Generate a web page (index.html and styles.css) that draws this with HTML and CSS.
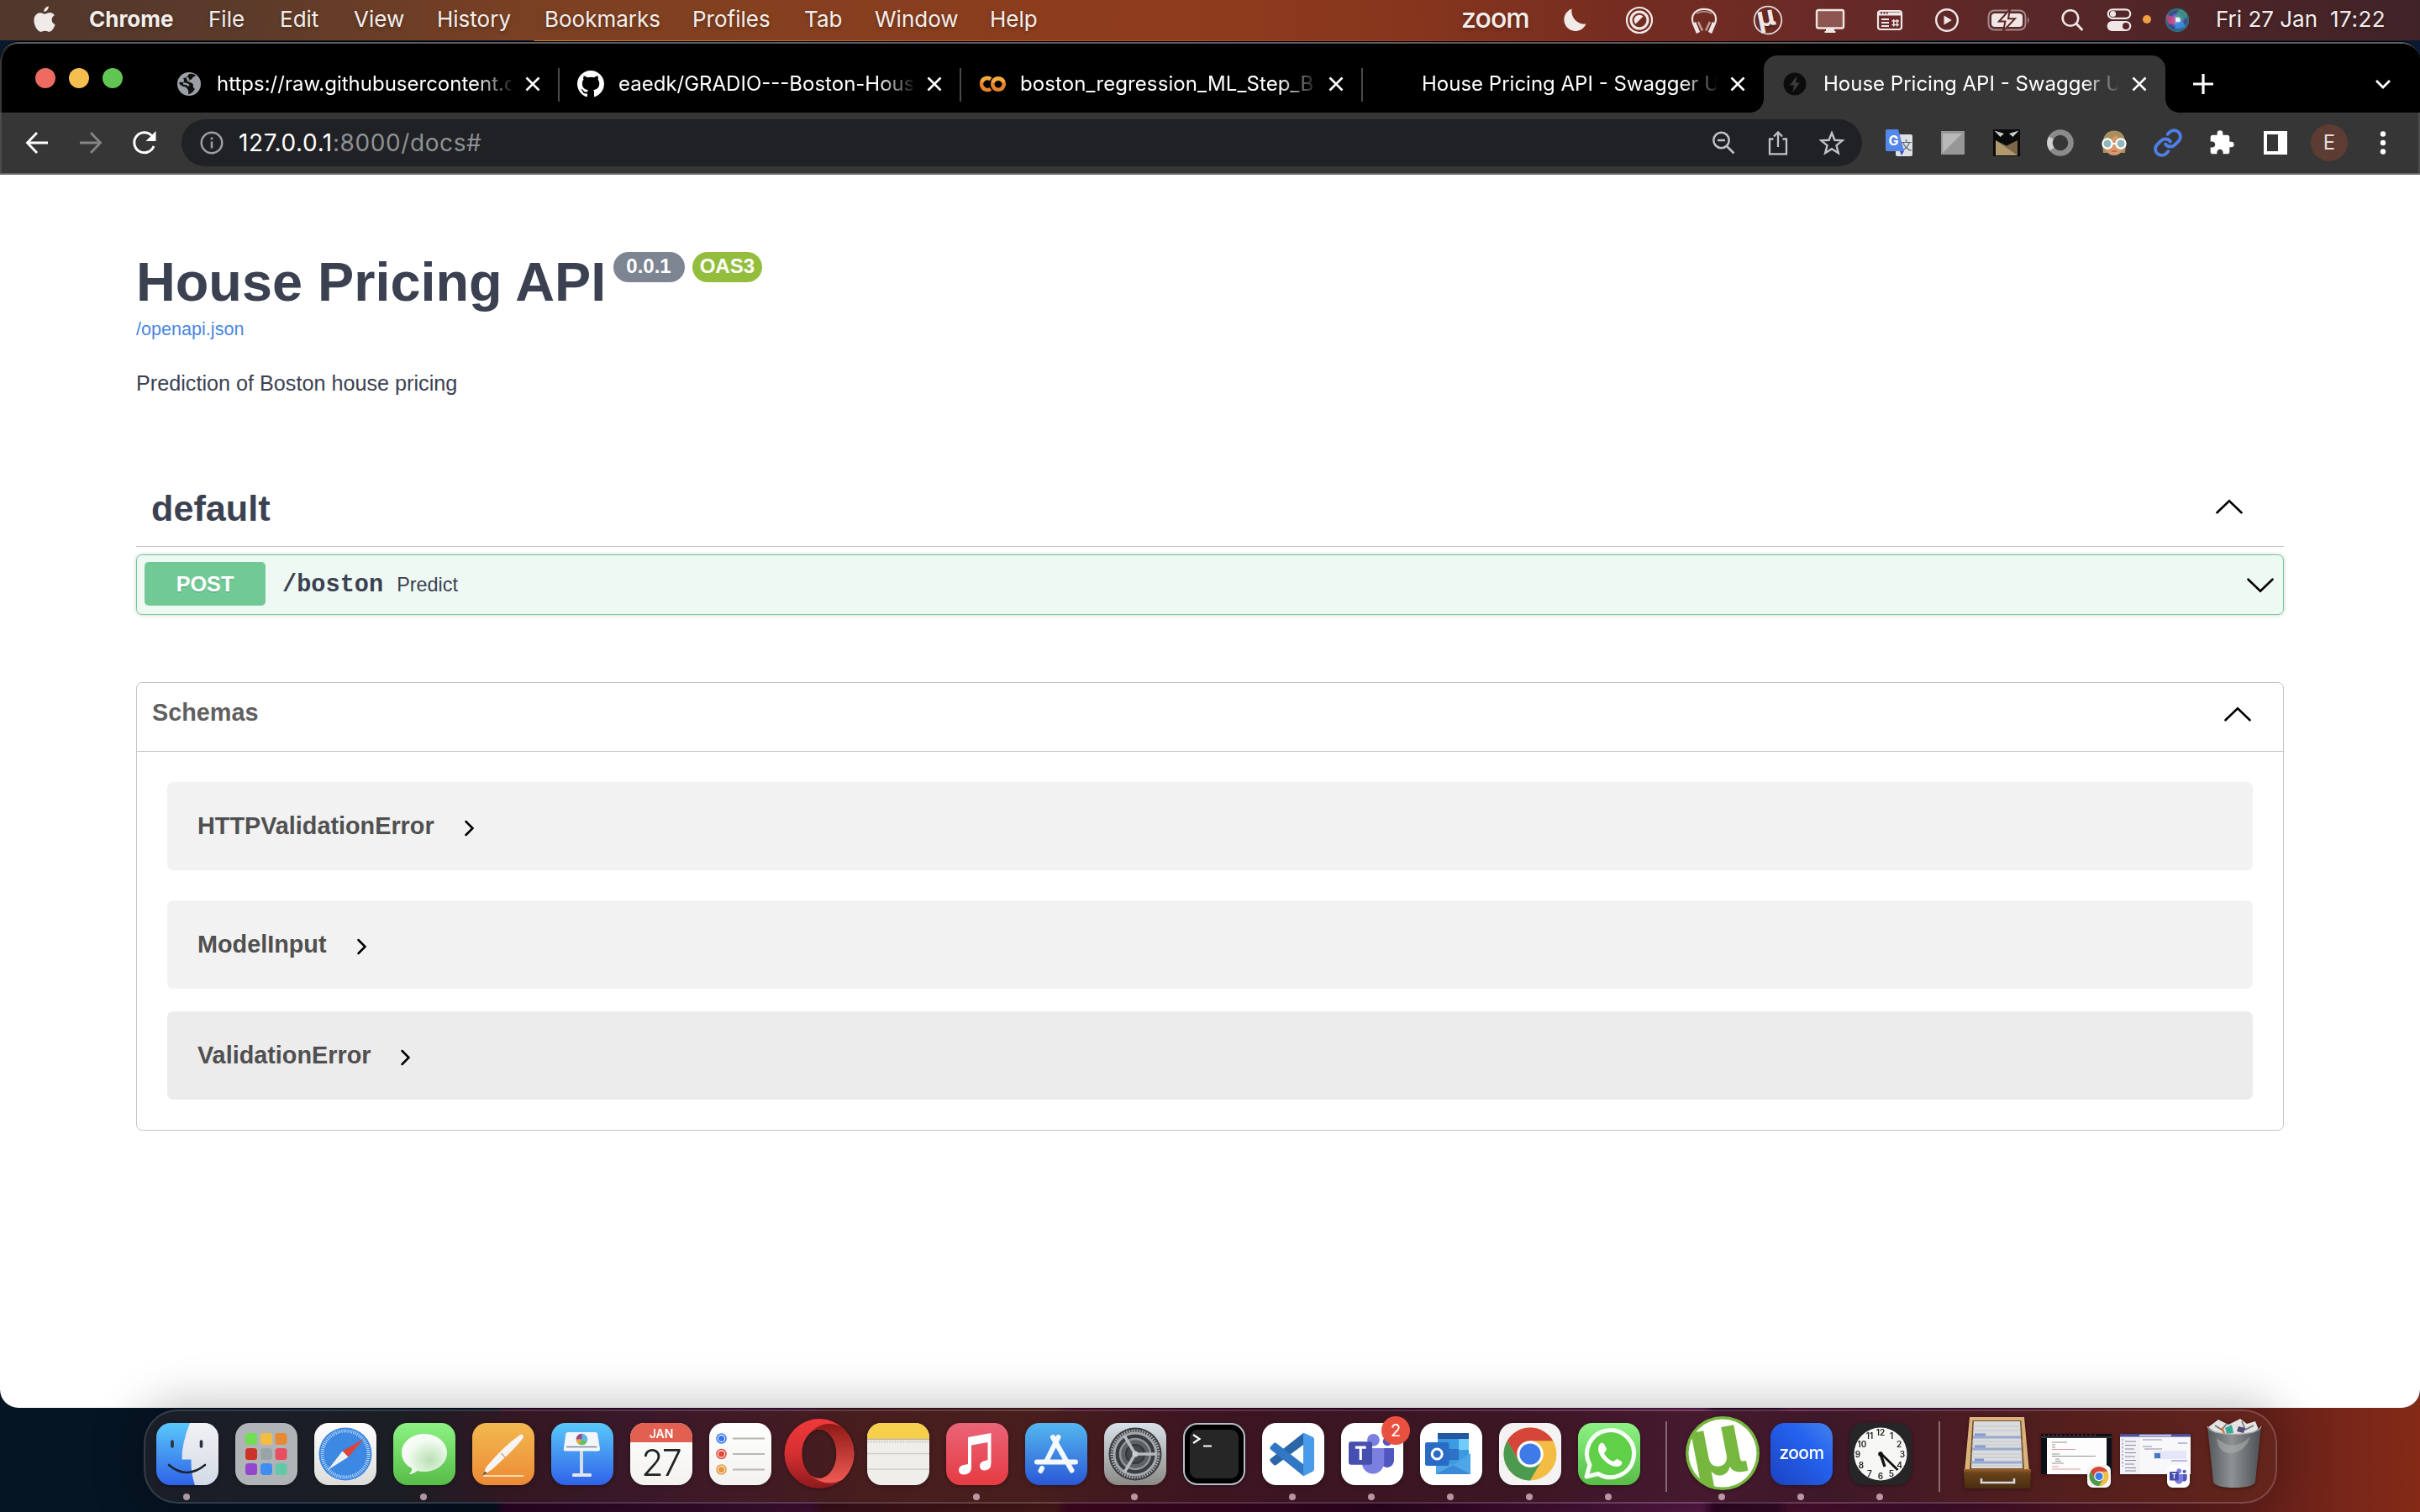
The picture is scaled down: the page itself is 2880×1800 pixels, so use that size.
FILE: index.html
```html
<!DOCTYPE html>
<html lang="en">
<head>
<meta charset="utf-8">
<title>House Pricing API - Swagger UI</title>
<link rel="stylesheet" href="styles.css">
</head>
<body>
<svg class="defs" width="0" height="0" aria-hidden="true">
  <defs>
    <linearGradient id="gBlue" x1="0" y1="0" x2="0" y2="1"><stop offset="0" stop-color="#5ac8fa"/><stop offset="1" stop-color="#2f62e8"/></linearGradient>
    <linearGradient id="gFace" x1="0" y1="0" x2="0" y2="1"><stop offset="0" stop-color="#f2f2f4"/><stop offset="1" stop-color="#d3dae6"/></linearGradient>
    <linearGradient id="gGreen" x1="0" y1="0" x2="0" y2="1"><stop offset="0" stop-color="#8cf283"/><stop offset="1" stop-color="#57bd47"/></linearGradient>
    <linearGradient id="gOrange" x1="0" y1="0" x2="0" y2="1"><stop offset="0" stop-color="#f3b94e"/><stop offset="1" stop-color="#ec8a36"/></linearGradient>
    <linearGradient id="gWhite" x1="0" y1="0" x2="0" y2="1"><stop offset="0" stop-color="#ffffff"/><stop offset="1" stop-color="#dcdcda"/></linearGradient>
    <linearGradient id="gPaper" x1="0" y1="0" x2="0" y2="1"><stop offset="0" stop-color="#ffffff"/><stop offset="1" stop-color="#f3f2ef"/></linearGradient>
    <linearGradient id="gRed" x1="0" y1="0" x2="0" y2="1"><stop offset="0" stop-color="#ea6478"/><stop offset="1" stop-color="#e63b42"/></linearGradient>
    <linearGradient id="gStore" x1="0" y1="0" x2="0" y2="1"><stop offset="0" stop-color="#54b7ef"/><stop offset="1" stop-color="#2a58d6"/></linearGradient>
    <linearGradient id="gGear" x1="0" y1="0" x2="0" y2="1"><stop offset="0" stop-color="#d8e2ea"/><stop offset="1" stop-color="#8c8a86"/></linearGradient>
    <linearGradient id="gOpera" x1="0" y1="0" x2="0" y2="1"><stop offset="0" stop-color="#f03a3c"/><stop offset=".5" stop-color="#d52f31"/><stop offset="1" stop-color="#8c1a1c"/></linearGradient>
    <linearGradient id="gOpera2" x1="0" y1="0" x2="0" y2="1"><stop offset="0" stop-color="#8f1a16"/><stop offset="1" stop-color="#f05a54"/></linearGradient>
    <linearGradient id="gZoom" x1="1" y1="0" x2="0" y2="1"><stop offset="0" stop-color="#4583ea"/><stop offset=".35" stop-color="#2563f0"/><stop offset="1" stop-color="#1b43c0"/></linearGradient>
    <linearGradient id="gTrash" x1="0" y1="0" x2="1" y2="0"><stop offset="0" stop-color="#54585b"/><stop offset=".45" stop-color="#8e9294"/><stop offset="1" stop-color="#4b4f52"/></linearGradient>
    <linearGradient id="gWood" x1="0" y1="0" x2="0" y2="1"><stop offset="0" stop-color="#a0622c"/><stop offset=".2" stop-color="#69421a"/><stop offset="1" stop-color="#4a2d10"/></linearGradient>
    <radialGradient id="gBubble" cx=".62" cy=".65" r=".8"><stop offset="0" stop-color="#b9e0b2"/><stop offset=".6" stop-color="#f1faf0"/><stop offset="1" stop-color="#fff"/></radialGradient>
    <radialGradient id="gSiri"><stop offset="0" stop-color="#e9f4ff"/><stop offset=".35" stop-color="#6c86d8"/><stop offset=".7" stop-color="#3d3f86"/><stop offset="1" stop-color="#2b7e86"/></radialGradient>
    <clipPath id="tile"><rect width="74" height="74" rx="17"/></clipPath>
    <clipPath id="disc"><circle cx="37" cy="36" r="41"/></clipPath>
    <symbol id="chrome" viewBox="0 0 64 64" overflow="visible">
      <circle cx="32" cy="32" r="32" fill="#f2bd42"/>
      <path d="M4.300 16A32 32 0 0 1 59.700 16H32L18.200 40Z" fill="#d5463a"/>
      <path d="M4.300 16A32 32 0 0 0 32 64L45.800 40L32 47L18.200 40Z" fill="#4c9a50"/>
      <circle cx="32" cy="32" r="16" fill="#fff"/><circle cx="32" cy="32" r="12.800" fill="#3f7be8"/>
    </symbol>
    <symbol id="teams" viewBox="0 0 56 50" overflow="visible">
      <circle cx="30" cy="8" r="7.500" fill="#7b7fe0"/><circle cx="47" cy="9.500" r="5.500" fill="#5257c0"/>
      <path d="M40 18H55V33A8.500 9 0 0 1 40 38Z" fill="#5257c0"/>
      <path d="M16 18H43V35A13.500 14 0 0 1 16 35Z" fill="#7b7fe0"/>
      <rect x="0" y="10" width="28.500" height="28" rx="2.500" fill="#464eb0"/>
      <path d="M8 17H21M14.500 17V32" stroke="#fff" stroke-width="3.200" fill="none"/>
    </symbol>
    <symbol id="close" viewBox="0 0 20 20"><path d="M2.500 2.500L17.500 17.500M17.500 2.500L2.500 17.500" stroke="#fff" stroke-width="2.600" fill="none"/></symbol>
    <symbol id="chevUp" viewBox="0 0 34 20"><path d="M2.500 17.300L17 3.200L31.500 17.300" stroke="#000" stroke-width="2.600" fill="none" stroke-linecap="round"/></symbol>
    <symbol id="chevDown" viewBox="0 0 34 20"><path d="M2.500 2.700L17 16.800L31.500 2.700" stroke="#000" stroke-width="2.600" fill="none" stroke-linecap="round"/></symbol>
    <symbol id="chevRight" viewBox="0 0 14 20"><path d="M2.500 2L10.500 10L2.500 18" stroke="#000" stroke-width="2.500" fill="none" stroke-linecap="round"/></symbol>
  </defs>
</svg>

<header class="menubar">
  <svg class="apple" width="28" height="32" viewBox="0 0 28 32" fill="#f0ebe8"><path d="M18.800 0.500C19 3.800 16.300 7 13.200 7C12.900 3.900 15.700 0.900 18.800 0.500Z"/><path d="M25.800 11.200C23.700 12.400 22.600 14.200 22.600 16.500C22.600 19.200 24.200 21.300 26.600 22.200C25.600 25.600 22.800 30.800 19.800 30.800C17.900 30.800 17 29.700 14.600 29.700C12.200 29.700 11.200 30.800 9.500 30.800C6 30.800 1.400 23.700 1.400 17.500C1.400 11.700 5 8.300 8.900 8.300C11.300 8.300 13 9.700 14.500 9.700C15.900 9.700 17.900 8.100 20.700 8.100C22.700 8.100 24.700 9.400 25.800 11.200Z"/></svg>
  <span class="appname">Chrome</span><span>File</span><span>Edit</span><span>View</span><span>History</span><span>Bookmarks</span><span>Profiles</span><span>Tab</span><span>Window</span><span>Help</span>
  <span class="zoomword">zoom</span>
  <div class="status">
    <svg width="34" height="34" viewBox="0 0 34 34"><path d="M13.500 3.500A13.600 13.600 0 1 0 30.500 21.500A15.500 15.500 0 0 1 13.500 3.500Z" fill="#f2eae8"/></svg>
    <svg width="34" height="34" viewBox="0 0 34 34" fill="none" stroke="#f2eae8"><circle cx="17" cy="17" r="15" stroke-width="2.200"/><circle cx="17" cy="17" r="10" stroke-width="3"/><path d="M21.500 12.500A6.300 6.300 0 0 0 12.500 21.500Z" fill="#f2eae8" stroke="none"/></svg>
    <svg width="34" height="34" viewBox="0 0 34 34" fill="none" stroke="#f0e4e2"><path d="M4 21C0 10 8 3.800 17 3.800S34 10 30 21" stroke-width="2.200"/><path d="M8 9Q17 4.500 26 9" stroke-width="1.400" opacity=".6"/><path d="M5 20L10 32M29 20L24 32" stroke-width="4.600"/><path d="M10 19L15 29.500M24 19L19 29.500" stroke-width="2.600" opacity=".6"/></svg>
    <svg width="36" height="36" viewBox="0 0 36 36"><circle cx="18" cy="18" r="16.300" fill="none" stroke="#e6d8d6" stroke-width="1.800"/><text class="mu-small" x="5.500" y="25" transform="rotate(-11 18 18)">µ</text></svg>
    <svg width="36" height="32" viewBox="0 0 36 32"><rect x="2" y="4" width="32" height="21.500" rx="2" fill="#8d5750" stroke="#f0e6e4" stroke-width="2.400"/><path d="M13 26H23V29H24.500V31H11.500V29H13Z" fill="#f0e6e4"/></svg>
    <svg width="32" height="28" viewBox="0 0 32 28" fill="none" stroke="#efe6e5" stroke-width="2.200"><rect x="2" y="3" width="28" height="22" rx="3"/><path d="M3 4.500H29V8.500H3Z" fill="#efe6e5" stroke="none"/><path d="M5 5.500H14" stroke="#6a2b26" stroke-width="2" stroke-dasharray="2 1.400"/><path d="M6 13H15M6 17H15M6 21H15" stroke-width="2"/><path d="M18.500 15H27M18.500 19.500H27M20.700 13V21.500M24.700 13V21.500" stroke-width="1.500"/></svg>
    <svg width="32" height="32" viewBox="0 0 32 32"><circle cx="16" cy="16" r="12.800" fill="none" stroke="#efe6e5" stroke-width="2.400"/><path d="M12.500 10.500L21.800 16L12.500 21.500Z" fill="#efe6e5"/></svg>
    <svg width="54" height="28" viewBox="0 0 54 28"><rect x="2.500" y="2.500" width="44" height="23" rx="7" fill="none" stroke="#a58a8b" stroke-width="2"/><rect x="6" y="6" width="37" height="16" rx="4" fill="#efe6e5"/><path d="M49 10Q52.500 14 49 18Z" fill="#a58a8b"/><path d="M28 1L15 15.500H22.500L20 27L34 12.200H26Z" fill="#efe6e5" stroke="#5c2726" stroke-width="2"/></svg>
    <svg width="30" height="30" viewBox="0 0 30 30" fill="none" stroke="#efe6e5" stroke-width="2.600" stroke-linecap="round"><circle cx="13" cy="12.500" r="9.300"/><path d="M20 19.300L26.500 26" stroke-width="3"/></svg>
    <svg width="30" height="30" viewBox="0 0 30 30"><rect x="1.800" y="2.300" width="26.400" height="10.500" rx="5.200" fill="none" stroke="#efe6e5" stroke-width="2.200"/><circle cx="7.500" cy="7.500" r="3.600" fill="#efe6e5"/><rect x=".6" y="16" width="28.800" height="12" rx="6" fill="#efe6e5"/><circle cx="23" cy="22" r="4" fill="#532527"/></svg>
    <i class="rec"></i>
    <svg width="30" height="30" viewBox="0 0 30 30"><circle cx="15" cy="15" r="14" fill="url(#gSiri)"/><path d="M2 9Q10 9 15 15Q10 22 4 19Z" fill="#e0467e" opacity=".75"/><path d="M15 15Q12 6 18 2Q28 5 27 11Q24 16 15 15Z" fill="#3f9a86" opacity=".8"/><path d="M15 15Q26 18 24 23Q16 27 12 25Z" fill="#3a8fe0" opacity=".85"/><circle cx="16" cy="14.500" r="3" fill="#fff" opacity=".85"/></svg>
  </div>
  <span class="date">Fri 27 Jan</span><span class="time">17:22</span>
</header>

<main class="window">
  <div class="tabstrip">
    <div class="lights"><i class="red"></i><i class="amber"></i><i class="green"></i></div>
    <div class="tab">
      <svg width="32" height="32" viewBox="0 0 32 32"><circle cx="16" cy="16" r="14" fill="#9aa0a6"/><path d="M16 4Q22 3 24 6.500Q20 7.500 19.500 10Q16 11 16 14Q20 14 21 17Q20 20 23 22Q20 27 15 28.500Q16 24 14 22Q13 19 9 19Q5 17 3.800 15Q6 13 9 14Q11 12 9 9Q12 9 14 7Z" fill="#101011"/><path d="M13 8.500Q16 10 15 13M9 15.500Q13 15 16 18" stroke="#9aa0a6" stroke-width="2.400" fill="none"/></svg>
      <span>https://raw.githubusercontent.c</span><svg class="x" width="20" height="20"><use href="#close"/></svg>
    </div>
    <div class="tab">
      <svg width="32" height="32" viewBox="0 0 16 16" fill="#fff"><path d="M8 0C3.580 0 0 3.580 0 8c0 3.540 2.290 6.530 5.470 7.590.4.070.55-.17.55-.38 0-.19-.01-.82-.01-1.490-2.010.37-2.530-.49-2.690-.94-.09-.23-.48-.94-.82-1.130-.28-.15-.68-.52-.01-.53.63-.01 1.080.58 1.230.82.72 1.210 1.870.87 2.330.66.07-.52.28-.87.51-1.070-1.780-.2-3.640-.89-3.640-3.950 0-.87.31-1.590.82-2.150-.08-.2-.36-1.020.08-2.120 0 0 .67-.21 2.200.82.64-.18 1.320-.27 2-.27s1.360.09 2 .27c1.530-1.040 2.200-.82 2.200-.82.44 1.100.16 1.920.08 2.120.51.56.82 1.270.82 2.150 0 3.070-1.870 3.750-3.650 3.950.29.25.54.73.54 1.480 0 1.070-.01 1.930-.01 2.200 0 .21.15.46.55.38A8.010 8.010 0 0 0 16 8c0-4.420-3.580-8-8-8z"/></svg>
      <span>eaedk/GRADIO---Boston-Hous</span><svg class="x" width="20" height="20"><use href="#close"/></svg>
    </div>
    <div class="tab">
      <svg width="32" height="32" viewBox="0 0 32 32" fill="none" stroke-width="4.600"><path d="M14 10.200A7 7 0 1 0 14 21.800" stroke="#e8842c"/><circle cx="23" cy="16" r="6.800" stroke="#e8842c"/><path d="M16.500 14A7 7 0 0 1 29.500 14M3.500 13A7 7 0 0 1 14 10.200" stroke="#f2ab3c"/></svg>
      <span class="wide">boston_regression_ML_Step_B</span><svg class="x" width="20" height="20"><use href="#close"/></svg>
    </div>
    <div class="tab last">
      <svg width="32" height="32"></svg>
      <span>House Pricing API - Swagger U</span><svg class="x" width="20" height="20"><use href="#close"/></svg>
    </div>
    <div class="tab active">
      <svg width="32" height="32" viewBox="0 0 32 32"><circle cx="15" cy="16" r="13.500" fill="#0c0c0c"/><path d="M17.500 6L9 17.500H14L12.500 26L21 14.500H16Z" fill="#3c3c3c"/></svg>
      <span>House Pricing API - Swagger U</span><svg class="x" width="20" height="20"><use href="#close"/></svg>
    </div>
    <svg class="plus" width="26" height="26" viewBox="0 0 26 26"><path d="M13 1V25M1 13H25" stroke="#fff" stroke-width="3.200"/></svg>
    <svg class="more" width="22" height="22" viewBox="0 0 22 22"><path d="M3 7L11 15L19 7" stroke="#fff" stroke-width="2.800" fill="none"/></svg>
  </div>

  <div class="toolbar">
    <svg width="30" height="30" viewBox="0 0 30 30" fill="none" stroke="#fff" stroke-width="2.800"><path d="M28 15H4M15 3L3.500 15L15 27"/></svg>
    <svg width="30" height="30" viewBox="0 0 30 30" fill="none" stroke="#858585" stroke-width="2.800"><path d="M2 15H26M15 3L26.500 15L15 27"/></svg>
    <svg width="30" height="30" viewBox="0 0 30 30"><path d="M26 19A12 12 0 1 1 23.500 6.500" fill="none" stroke="#fff" stroke-width="3"/><path d="M28.500 1V13H16.500Z" fill="#fff"/></svg>
    <div class="omnibox">
      <svg width="28" height="28" viewBox="0 0 28 28"><circle cx="14" cy="14" r="12.300" fill="none" stroke="#9aa0a6" stroke-width="2.500"/><path d="M14 12.500V20.500M14 7.500V10.200" stroke="#9aa0a6" stroke-width="2.600"/></svg>
      <span class="url">127.0.0.1<em>:8000/docs#</em></span>
      <svg width="30" height="30" viewBox="0 0 30 30" fill="none" stroke="#bfc3c7" stroke-width="2.500"><circle cx="12.500" cy="12" r="9.200"/><path d="M19 19L27.500 27.500M8 12H17"/></svg>
      <svg width="30" height="30" viewBox="0 0 30 30" fill="none" stroke="#bfc3c7" stroke-width="2.300"><path d="M9.500 10.500H5V28.300H25V10.500H20.500M15 20V2.500M10 7.500L15 2.300L20 7.500"/></svg>
      <svg width="30" height="30" viewBox="0 0 30 30" fill="none" stroke="#bfc3c7" stroke-width="2.400"><path d="M15 3.200L18.400 11.800L27.600 12.300L20.500 18.200L22.800 27.200L15 22.200L7.200 27.200L9.500 18.200L2.400 12.300L11.600 11.800Z"/></svg>
    </div>
    <div class="exts">
      <svg width="32" height="32" viewBox="0 0 32 32"><rect x="12" y="6" width="20" height="26" rx="2" fill="#dfe1e4"/><path d="M17 26H22L19 31Z" fill="#3b50b8"/><text class="wen" x="17.500" y="24">文</text><path d="M0 2Q0 0 2 0H15L22 26H2Q0 26 0 24Z" fill="#5487ec"/><text class="g" x="3.500" y="18.500">G</text></svg>
      <svg width="28" height="28" viewBox="0 0 28 28"><path d="M0 0H28V28H0Z" fill="#979797"/><path d="M2 3H25L2 26Z" fill="#b9b9b9"/></svg>
      <svg width="32" height="32" viewBox="0 0 32 32"><rect width="32" height="32" fill="#0a0a0a"/><path d="M3 31V13L16 19.500L29 13V31Z" fill="#7a6849"/><path d="M3 31V13L29 31Z" fill="#b1986e"/><path d="M1.500 1.500L13 5L8.500 9ZM30.500 1.500L19 5L23.500 9Z" fill="#c9c9c9"/></svg>
      <svg width="32" height="32" viewBox="0 0 32 32" fill="none" stroke-width="6.500"><circle cx="16" cy="16" r="12.500" stroke="#8b8b8b"/><path d="M5 10A12.500 12.500 0 0 0 6 23.500" stroke="#cfcfcf"/></svg>
      <svg width="32" height="32" viewBox="0 0 32 32"><path d="M3 28Q-1 2 16 1.500Q33 2 29 28Z" fill="#a8915f"/><path d="M5 14Q14 12 18 7Q22 11 27 14V22Q24 31 16 31Q8 31 5 22Z" fill="#d9986c"/><circle cx="8" cy="17" r="5.600" fill="#8fb6bd" stroke="#fff" stroke-width="2.200"/><circle cx="24" cy="17" r="5.600" fill="#8fb6bd" stroke="#fff" stroke-width="2.200"/><path d="M13 17H19" stroke="#fff" stroke-width="2"/><path d="M13 26H19" stroke="#b0603f" stroke-width="1.400"/></svg>
      <svg width="36" height="36" viewBox="0 0 24 24" fill="none" stroke="#4f7fe6" stroke-width="2.600" stroke-linecap="round"><path d="M10 13a5 5 0 0 0 7.540.54l3-3a5 5 0 0 0-7.070-7.070l-1.720 1.710"/><path d="M14 11a5 5 0 0 0-7.540-.54l-3 3a5 5 0 0 0 7.070 7.070l1.710-1.710"/></svg>
      <svg width="32" height="32" viewBox="0 0 24 24" fill="#fff"><path d="M20.500 11H19V7c0-1.100-.9-2-2-2h-4V3.500a2.500 2.500 0 0 0-5 0V5H4c-1.100 0-1.990.9-1.990 2v3.800H3.500c1.490 0 2.700 1.210 2.700 2.700s-1.210 2.700-2.700 2.700H2V20c0 1.100.9 2 2 2h3.800v-1.500c0-1.490 1.210-2.700 2.700-2.700s2.700 1.210 2.700 2.700V22H17c1.100 0 2-.9 2-2v-4h1.500a2.500 2.500 0 0 0 0-5z"/></svg>
      <svg width="28" height="28" viewBox="0 0 28 28"><path d="M0 0H28V28H0ZM4 4V24H17V4Z" fill="#fff" fill-rule="evenodd"/></svg>
      <span class="avatar">E</span>
      <svg width="8" height="28" viewBox="0 0 8 28" fill="#fff"><circle cx="4" cy="3.500" r="3.200"/><circle cx="4" cy="14" r="3.200"/><circle cx="4" cy="24.500" r="3.200"/></svg>
    </div>
  </div>

  <div class="page">
    <div class="title"><h1>House Pricing API</h1><span class="badge ver">0.0.1</span><span class="badge oas">OAS3</span></div>
    <a class="spec">/openapi.json</a>
    <p class="desc">Prediction of Boston house pricing</p>
    <div class="tag"><h2>default</h2><svg width="34" height="20"><use href="#chevUp"/></svg></div>
    <div class="op"><span class="method">POST</span><span class="path">/boston</span><span class="sum">Predict</span><svg width="34" height="20"><use href="#chevDown"/></svg></div>
    <section class="schemas">
      <div class="schead"><h3>Schemas</h3><svg width="34" height="20"><use href="#chevUp"/></svg></div>
      <div class="model">HTTPValidationError<svg width="14" height="20"><use href="#chevRight"/></svg></div>
      <div class="model">ModelInput<svg width="14" height="20"><use href="#chevRight"/></svg></div>
      <div class="model hover">ValidationError<svg width="14" height="20"><use href="#chevRight"/></svg></div>
    </section>
  </div>
</main>

<footer class="dock">
  <div class="app on"><svg viewBox="0 0 74 74"><g clip-path="url(#tile)"><rect width="74" height="74" fill="url(#gBlue)"/><path d="M40 0Q30 25 30.500 43.500H41.500Q41 60 46 74H74V0Z" fill="url(#gFace)"/></g><path d="M19 22V28M53.500 22V28" stroke="#283240" stroke-width="3.600" stroke-linecap="round"/><path d="M15 50Q36 68 58 50" fill="none" stroke="#1c2433" stroke-width="2.600" stroke-linecap="round"/></svg></div>
  <div class="app"><svg viewBox="0 0 74 74"><rect width="74" height="74" rx="17" fill="#b1b4b7"/><g><rect x="12" y="12" width="14" height="14" rx="3.500" fill="#70dd55"/><rect x="30" y="12" width="14" height="14" rx="3.500" fill="#f2bd42"/><rect x="47.500" y="12" width="14" height="14" rx="3.500" fill="#e68a35"/><rect x="12" y="30" width="14" height="14" rx="3.500" fill="#cc3328"/><rect x="30" y="30" width="14" height="14" rx="3.500" fill="#9aa3a8"/><rect x="47.500" y="30" width="14" height="14" rx="3.500" fill="#e94e60"/><rect x="12" y="48" width="14" height="14" rx="3.500" fill="#9247cc"/><rect x="30" y="48" width="14" height="14" rx="3.500" fill="#3f8df0"/><rect x="47.500" y="48" width="14" height="14" rx="3.500" fill="#62c8a6"/></g></svg></div>
  <div class="app"><svg viewBox="0 0 74 74"><rect width="74" height="74" rx="17" fill="url(#gWhite)"/><circle cx="37" cy="37" r="31.500" fill="#3c88e2"/><circle cx="37" cy="37" r="27.500" fill="none" stroke="#d5e6fa" stroke-width="4" stroke-dasharray=".9 1.500"/><path d="M59 19L33.500 33.500L40.500 40.500Z" fill="#df4337"/><path d="M16 56L33.500 33.500L40.500 40.500Z" fill="#f1f1f3"/></svg></div>
  <div class="app on"><svg viewBox="0 0 74 74"><rect width="74" height="74" rx="17" fill="url(#gGreen)"/><path d="M37 13C52 13 64 23 64 35.500S52 58 37 58Q32 58 28.500 57Q24 61 19 61Q23 57 22 54C14 50 10 43 10 35.500C10 23 22 13 37 13Z" fill="url(#gBubble)"/></svg></div>
  <div class="app"><svg viewBox="0 0 74 74"><rect width="74" height="74" rx="17" fill="url(#gOrange)"/><path d="M13 63H61" stroke="#fbdcae" stroke-width="2.200"/><path d="M56.500 14.500Q60 12 61 16.500Q58 24 24 55L12 63L17 52Q38 27 56.500 14.500Z" fill="#f7f5f2"/><path d="M34.500 36L39 41" stroke="#b9a486" stroke-width="1.400"/><path d="M12 63L14.500 57.500L18 59.500Z" fill="#6b5a45"/></svg></div>
  <div class="app"><svg viewBox="0 0 74 74"><rect width="74" height="74" rx="17" fill="url(#gBlue)"/><path d="M36 30V61" stroke="#d7dde6" stroke-width="4"/><path d="M17.500 12.500Q18 11 20 11H52.500Q54.500 11 55 12.500L58 31Q58 33.500 55.500 33.500H17Q14.500 33.500 14.800 31Z" fill="#f4f6f9"/><path d="M18 28.500H54.500" stroke="#7d8ba0" stroke-width="1.600"/><circle cx="36.500" cy="19.500" r="6.800" fill="#5bb8e8"/><path d="M36.500 19.500V12.700A6.800 6.800 0 0 0 29.700 19.500Z" fill="#a14488"/><path d="M36.500 19.500H29.700A6.800 6.800 0 0 0 33 25.300Z" fill="#eba53a"/><path d="M36.500 19.500L33 25.300A6.800 6.800 0 0 0 42.500 22.500Z" fill="#6abf5b"/><rect x="25" y="60" width="23" height="4" rx="1.500" fill="#e2e6ec"/></svg></div>
  <div class="app"><svg viewBox="0 0 74 74"><g clip-path="url(#tile)"><rect width="74" height="74" fill="url(#gPaper)"/><rect width="74" height="23" fill="#e2604f"/></g><text class="mon" x="37" y="18">JAN</text><text class="day" x="36.500" y="62.500">27</text></svg></div>
  <div class="app"><svg viewBox="0 0 74 74"><rect width="74" height="74" rx="17" fill="url(#gPaper)"/><g stroke="#b8b8b6" stroke-width="1.800"><path d="M28 18.500H66M28 37H66M28 55.500H66"/></g><g fill="none" stroke-width="1.500"><circle cx="14.500" cy="18.500" r="5.500" stroke="#3577ee"/><circle cx="14.500" cy="37" r="5.500" stroke="#e2483c"/><circle cx="14.500" cy="55.500" r="5.500" stroke="#e8973a"/></g><circle cx="14.500" cy="18.500" r="3.600" fill="#3577ee"/><circle cx="14.500" cy="37" r="3.600" fill="#e2483c"/><circle cx="14.500" cy="55.500" r="3.600" fill="#e8973a"/></svg></div>
  <div class="app"><svg viewBox="0 0 74 74"><path d="M37 -5A41.500 41.500 0 1 0 37 78A41.500 41.500 0 1 0 37 -5ZM37 7.500C47 7.500 57.500 19 57.500 36.500S47 66 37 66S16.500 54 16.500 36.500S27 7.500 37 7.500Z" fill="url(#gOpera)" fill-rule="evenodd"/><path d="M27 10.500Q44 -5 64 5A41.500 41.500 0 0 1 64 68Q44 77 27 62.500Q32 66 37 66C47 66 57.500 54 57.500 36.500S47 7.500 37 7.500Q32 7.500 27 10.500Z" fill="url(#gOpera2)"/></svg></div>
  <div class="app"><svg viewBox="0 0 74 74"><g clip-path="url(#tile)"><rect width="74" height="74" fill="#efeeeb"/><rect width="74" height="19" fill="#f6cf4b"/><path d="M0 19.500H74" stroke="#b9b4a3" stroke-width="1.400"/><path d="M1 22.500H74" stroke="#bdbcb8" stroke-width="1.600" stroke-dasharray="1.600 1.600"/><path d="M0 36.500H74M0 55H74" stroke="#cfcecb" stroke-width="1.400"/></g></svg></div>
  <div class="app on"><svg viewBox="0 0 74 74"><rect width="74" height="74" rx="17" fill="url(#gRed)"/><path d="M26 17L53.500 12V48Q53.500 56 46 56.500Q39.500 56.500 40 50.500Q40.500 46 46 45L49.500 44V23L30 26.500V53Q30 60.500 22 61.500Q14.500 61.500 15 55.500Q15.500 51 21 50L26 49Z" fill="#fff"/></svg></div>
  <div class="app"><svg viewBox="0 0 74 74"><rect width="74" height="74" rx="17" fill="url(#gStore)"/><g stroke="#f5f9ff" stroke-width="6" stroke-linecap="round"><path d="M39.500 17L25 46M33 17L55.500 56.500M14 46.500H60M20 54L18.500 57"/></g></svg></div>
  <div class="app on"><svg viewBox="0 0 74 74"><rect width="74" height="74" rx="17" fill="url(#gGear)"/><circle cx="37" cy="37" r="31.500" fill="#3a3c3e"/><circle cx="37" cy="37" r="28" fill="none" stroke="#a3a9ae" stroke-width="3" stroke-dasharray="1.800 1.300"/><circle cx="37" cy="37" r="25" fill="none" stroke="#a3a9ae" stroke-width="3"/><circle cx="37" cy="37" r="18" fill="#5d6164" stroke="#8f959a" stroke-width="2.500"/><circle cx="37" cy="37" r="11" fill="#46494c" stroke="#33363a" stroke-width="2"/><path d="M37 37L24 15M37 37H62M37 37L24 59" stroke="#b6bcc1" stroke-width="3.500"/><circle cx="37" cy="37" r="3.500" fill="#caced1"/></svg></div>
  <div class="app"><svg viewBox="0 0 74 74"><rect width="74" height="74" rx="17" fill="#b7c0c6"/><rect x="2" y="2" width="70" height="70" rx="15" fill="#000"/><rect x="8" y="8" width="58" height="58" rx="9" fill="#262626"/><path d="M12 14L19.500 19L12 24M24 27.500H34" fill="none" stroke="#fff" stroke-width="2.200"/></svg></div>
  <div class="app on"><svg viewBox="0 0 74 74"><rect width="74" height="74" rx="17" fill="#fff"/><path d="M49 12L9.500 43Q9 45 10.500 46.500L14 50Q16 51 17.500 49.500L49 26Z" fill="#2a66a8"/><path d="M49 63L9.500 31Q9 29 10.500 27.500L14 24Q16 23 17.500 24.500L49 49Z" fill="#3277c4"/><path d="M49 11.500L60 16.500Q62 17.500 62 19.500V55Q62 57 60 58L49 63.500Z" fill="#489be8"/></svg></div>
  <div class="app on"><svg viewBox="0 0 74 74"><rect width="74" height="74" rx="17" fill="#fff"/><use href="#teams" x="9" y="12" width="55" height="50"/></svg><b class="badge2">2</b></div>
  <div class="app on"><svg viewBox="0 0 74 74"><rect width="74" height="74" rx="17" fill="#fff"/><rect x="21" y="12" width="37" height="38" rx="2" fill="#3b9ae0"/><rect x="21" y="12" width="37" height="7" fill="#24599f"/><rect x="46" y="19" width="12" height="13" fill="#70cdf7"/><rect x="34" y="31" width="12" height="13" fill="#2d72c6"/><path d="M19 40L39 50L60 36V61H19Z" fill="#4ea6e6"/><path d="M39 50L60 61V61H19Z" fill="#3a8ad8"/><rect x="6" y="23" width="28.500" height="28" rx="2.500" fill="#2a6cc4"/><circle cx="20.200" cy="37" r="6" fill="none" stroke="#fff" stroke-width="3"/></svg></div>
  <div class="app on"><svg viewBox="0 0 74 74"><rect width="74" height="74" rx="17" fill="#f4f2f2"/><use href="#chrome" x="5.500" y="5.500" width="63" height="63"/></svg></div>
  <div class="app on"><svg viewBox="0 0 74 74"><rect width="74" height="74" rx="17" fill="url(#gGreen)"/><path d="M10 64L14 50A28 28 0 1 1 24 60.500Z" fill="#60d048" stroke="#f6fcf5" stroke-width="5" stroke-linejoin="round"/><path d="M27 24Q29 23 31 25L34 31Q34 33 31 36Q34 43 42 46Q45 43 47 43L52 46Q53 49 50 51Q44 54 35 48Q25 40 24 32Q24 26 27 24Z" fill="#fff"/></svg></div>
  <i class="sep"></i>
  <div class="app on"><svg viewBox="0 0 74 74"><circle cx="37" cy="36" r="44" fill="#76b83f"/><circle cx="37" cy="36" r="40.500" fill="#fff"/><g clip-path="url(#disc)"><text class="mu-big" x="-2" y="62" transform="rotate(-11 37 36)">µ</text></g></svg></div>
  <div class="app on"><svg viewBox="0 0 74 74"><rect width="74" height="74" rx="17" fill="url(#gZoom)"/><text class="zm" x="37" y="43">zoom</text></svg></div>
  <div class="app on"><svg viewBox="0 0 74 74"><rect width="74" height="74" rx="17" fill="#262628"/><circle cx="37" cy="37" r="31.500" fill="#f7f7f6"/><g class="num"><text x="37" y="15">12</text><text x="50" y="19">1</text><text x="59" y="28.500">2</text><text x="63" y="41">3</text><text x="59.500" y="54">4</text><text x="50" y="63.500">5</text><text x="37" y="67">6</text><text x="24" y="63.500">7</text><text x="14" y="54">8</text><text x="10" y="41">9</text><text x="15" y="28.500">10</text><text x="24" y="19">11</text></g><path d="M37 37L42 52" stroke="#111" stroke-width="3.400"/><path d="M36 35L57.500 56" stroke="#111" stroke-width="2.800"/><circle cx="37" cy="37" r="2.800" fill="#111"/></svg></div>
  <i class="sep second"></i>
  <div class="app"><svg viewBox="0 0 74 74"><path d="M4 -7H69L75 58H-2Z" fill="#dcb27c"/><path d="M7.500 -3H65.500L69 55H4Z" fill="#70532f"/><path d="M9 -2H64L67 54H6Z" fill="#d9dbdd"/><g stroke="#9aa9cd" stroke-width="3"><path d="M8 17H65M7 31H66M6 47H67"/></g><path d="M10 14H23M10 28H23M10 44H21" stroke="#7f98cd" stroke-width="3"/><path d="M8 4H65M8 9H65M7 22H66M7 26H66M6 37H67M6 41H67M6 51H67" stroke="#c3c5c7" stroke-width="1.200"/><path d="M-3 55H77L76 78H-2Z" fill="url(#gWood)"/><path d="M18 66V71H57V66" fill="none" stroke="#d5d8da" stroke-width="2.600"/></svg></div>
  <div class="app"><svg viewBox="0 0 74 74"><rect x="-5" y="13" width="84" height="48" fill="#0d1018"/><rect x="2" y="18" width="71" height="43" fill="#fdfdfd"/><rect x="-5" y="16" width="84" height="2" fill="#35353a"/><path d="M-2 14.500H60" stroke="#a93b36" stroke-width="1.200" stroke-dasharray="2 3"/><g stroke="#888" stroke-width=".9"><path d="M8 23H26M8 26H12M8 29H12M8 37H17M8 39.500H60M12 43H17M12 45.500H19M8 48H22"/></g><path d="M8 31.500H36M8 55H42M8 52H16" stroke="#dc9a97" stroke-width="1"/><rect x="50" y="50" width="28" height="27" rx="6.500" fill="#f6f4f4"/><use href="#chrome" x="52.500" y="52" width="23" height="23"/></svg></div>
  <div class="app"><svg viewBox="0 0 74 74"><rect x="-5" y="13" width="84" height="48" fill="#f1f1f6"/><rect x="-5" y="13" width="84" height="3.500" fill="#4c5099"/><rect x="18" y="13.800" width="38" height="1.900" fill="#c9cbe6"/><rect x="19" y="17" width="60" height="44" fill="#f8f8fb"/><g stroke="#8b8b9c" stroke-width="1"><path d="M1 22H14M1 26.500H14M1 31H12M1 35.500H14M1 40H13M1 44.500H14M1 49H12M1 53.500H14M1 57H14M22 20H45M22 28H33M24 31H45"/></g><path d="M-2 19V52" stroke="#b9bade" stroke-width="2" stroke-dasharray="2.500 2"/><rect x="35" y="33" width="39" height="10" fill="#e5e6f7"/><rect x="36" y="36" width="7" height="6" fill="#4a78c0"/><path d="M64 24H75M56 45H75" stroke="#a3a7dd" stroke-width="1.500"/><rect x="51" y="50" width="27" height="27" rx="6.500" fill="#fff"/><use href="#teams" x="54" y="54" width="21" height="19"/></svg></div>
  <div class="app"><svg viewBox="0 0 74 74"><path d="M6 5L18 -4L30 2L44 -5L52 1L62 -2L66 8L58 14H14Z" fill="#e4e4e2"/><path d="M14 3L22 8L28 1M46 -2L50 8L60 3" fill="none" stroke="#77777a" stroke-width="1.800"/><path d="M26 6L34 2L36 12L28 13Z" fill="#38a99a"/><path d="M42 4L50 6L48 12L40 10Z" fill="#5a4a7c"/><path d="M22 6L25 12" stroke="#d9702c" stroke-width="2.500"/><path d="M5 4L14 11Q37 16 60 11L69 4L62 70Q60 77 37 77Q14 77 12 70Z" fill="url(#gTrash)"/><path d="M16 18Q36 36 56 16Q50 36 30 36Q18 34 16 18Z" fill="#b2b5b6" opacity=".5"/><path d="M5 4Q8 13 37 13.500Q66 13 69 4" fill="none" stroke="#a9adaf" stroke-width="1.200"/></svg></div>
</footer>
</body>
</html>
```
FILE: styles.css
```css
* { box-sizing: border-box; margin: 0; padding: 0; }
html { overflow: hidden; }
body {
  width: 2880px; height: 1800px; overflow: hidden;
  display: flex; flex-direction: column;
  font-family: Inter, "Noto Sans CJK SC", sans-serif;
  background:
    linear-gradient(90deg, #081a30 635px, #c08a3a 636px, #b5622e 1100px, #a23c20 1700px, #7c2420 2050px, #10203c 2320px, #0a1a34 2880px) 0 0 / 100% 80px no-repeat,
    linear-gradient(90deg, #061524 0, #04111f 588px, #280423 600px, #3d1030 965px, #39101a 980px, #471a18 1255px, #400720 1270px, #2d0420 1650px, #561a45 2025px, #2f0624 2040px, #330a26 2115px, #4a1030 2130px, #400d2c 2300px, #611f1c 2650px, #852a17 2880px);
}
svg { display: block; flex: none; overflow: visible; }
.defs { position: absolute; }

/* macOS menu bar */
.menubar {
  height: 48px; flex: none;
  display: grid; align-items: center;
  grid-template-columns: 67px 142px 85px 88px 99px 128px 176px 133px 84px 137px 561px 107px 791px 136px 107px;
  padding-left: 39px;
  font-size: 26px; line-height: 46px; color: #f3eeeb; white-space: nowrap;
  text-shadow: 0 2px 4px rgba(0,0,0,.3);
  background: linear-gradient(90deg, #50372c 0, #5d3b2a 300px, #7a4023 620px, #84401f 900px, #8f3b1d 1400px, #87361d 1680px, #762d21 1920px, #642928 2250px, #4e2528 2600px, #402328 2880px);
}
.menubar span { height: 48px; }
.apple { margin-top: -3px; }
.appname { font-weight: 700; }
.zoomword { font-weight: 500; font-size: 32px; line-height: 43px; letter-spacing: -.9px; }
.status { display: grid; grid-template-columns: 79px 76px 77px 75px 74px 68px 68px 79px 71px 41px 26px 46px; align-items: center; justify-items: center; margin-left: -12px; height: 48px; }
.rec { width: 10px; height: 10px; border-radius: 50%; background: #f0a03c; margin-top: -2px; }
.time { letter-spacing: .5px; }
.mu-small { font: 700 34px Inter, sans-serif; fill: #f0e6e4; }

/* browser window */
.window {
  height: 1626px; flex: none; margin-top: 2px; display: flex; flex-direction: column;
  border-top: 2px solid #5e5e60; border-radius: 22px; overflow: hidden; background: #000;
  box-shadow: 0 -1px 0 #000;
}
.tabstrip { height: 82px; flex: none; display: flex; background: #000; }
.lights { width: 187px; padding: 29px 0 0 40px; display: flex; gap: 16px; border-left: 2px solid #3a3a3a; border-top-left-radius: 22px; }
.lights i { width: 24px; height: 24px; border-radius: 50%; }
.red { background: #ed6b60; } .amber { background: #f5bf4f; } .green { background: #61c554; }
.tab {
  width: 478px; height: 68px; margin-top: 14px; padding-left: 22px; flex: none;
  display: grid; grid-template-columns: 49px 350px 36px; align-items: center; position: relative;
}
.tab span {
  font-size: 24px; line-height: 68px; color: #fff; white-space: nowrap;
  -webkit-mask-image: linear-gradient(90deg, #000 308px, transparent 356px);
  mask-image: linear-gradient(90deg, #000 308px, transparent 356px);
}
.tab .wide { letter-spacing: .1px; }
.tab:not(.active):not(.last)::after { content: ""; position: absolute; right: -1px; top: 15px; width: 2px; height: 40px; background: #4a4a4d; }
.tab .x { justify-self: end; }
.tab.active { background: #363636; border-radius: 16px 16px 0 0; }
.tab.active::before, .tab.active::after { content: ""; position: absolute; bottom: 0; width: 16px; height: 16px; }
.tab.active::before { left: -16px; background: radial-gradient(circle at 0 0, transparent 15.500px, #363636 16px); }
.tab.active::after { right: -16px; background: radial-gradient(circle at 100% 0, transparent 15.500px, #363636 16px); }
.plus { margin: 35px 0 0 32px; }
.more { margin: 37px 0 0 190px; }

.toolbar {
  height: 74px; flex: none; display: grid; align-items: center; justify-items: center;
  grid-template-columns: 64px 64px 64px 2024px 640px; padding: 0 12px;
  background: #363636; border-bottom: 2px solid #666;
  box-shadow: inset 2px 0 #4c4c4c, inset -2px 0 #4c4c4c;
}
.omnibox {
  width: 2000px; height: 56px; border-radius: 28px; background: #202124;
  display: grid; grid-template-columns: 46px 1fr 65px 64px 51px; align-items: center; padding-left: 22px;
}
.url { font-size: 28px; line-height: 56px; letter-spacing: .6px; color: #fff; }
.url em { font-style: normal; color: #8e9195; }
.exts { width: 640px; display: grid; grid-template-columns: repeat(10, 64px); align-items: center; justify-items: center; }
.g { font: 700 16px Inter, sans-serif; fill: #fff; }
.wen { font: 14px "Noto Sans CJK SC", sans-serif; fill: #566; }
.avatar { width: 44px; height: 44px; border-radius: 50%; background: #5c3c33; color: #e5dcd8; font-size: 24px; line-height: 44px; text-align: center; }

/* documentation page */
.page { flex: 1; background: #fff; padding: 89px 162px 0; font-family: "Liberation Sans", Arial, sans-serif; color: #3b4151; }
.title { display: flex; height: 77px; }
.title h1 { font-size: 64.800px; line-height: 77px; font-weight: 700; margin-right: 9px; }
.badge { height: 36px; margin-top: 3px; border-radius: 18px; color: #fff; font: 700 24px/34px "Liberation Sans", Arial, sans-serif; }
.ver { background: #7d8492; padding: 0 16px 0 15px; margin-right: 9px; }
.oas { background: #93be3d; padding: 0 9px; }
.spec { display: block; margin-top: 4px; font-size: 21.600px; line-height: 28px; color: #4a87e0; }
.desc { margin-top: 35px; font-size: 25.200px; line-height: 30px; }
.tag { margin-top: 89px; height: 91px; border-bottom: 1px solid #c3c5ca; padding: 0 48px 0 18px; display: flex; align-items: center; justify-content: space-between; }
.tag svg { margin-bottom: 5px; }
.tag h2 { font-size: 43.200px; line-height: 90px; }
.op {
  margin-top: 9px; height: 72px; border: 1px solid #70ca98; border-radius: 7px; background: #eff9f4;
  box-shadow: 0 0 5px rgba(0,0,0,.19);
  display: flex; align-items: center; padding: 0 10px 2px 9px;
}
.op svg { margin-left: auto; margin-top: 3px; }
.method { width: 144px; height: 52px; margin-right: 20px; border-radius: 5px; background: #71ca96; color: #fff; font-weight: 700; font-size: 25.200px; line-height: 52px; text-align: center; text-shadow: 0 2px 0 rgba(0,0,0,.1); }
.path { font: 700 28.600px/52px "Liberation Mono", "Courier New", monospace; margin: 4px 16px 0 0; }
.sum { font-size: 23.400px; line-height: 54px; margin-top: 2px; }
.schemas { margin-top: 80px; height: 534px; border: 1px solid #c4c5c9; border-radius: 7px; }
.schead { height: 82px; border-bottom: 1px solid #c4c5c9; display: flex; justify-content: space-between; padding: 0 37px 0 18px; margin-bottom: 36px; }
.schead h3 { font-size: 28.800px; line-height: 70px; color: #606060; }
.schead svg { margin-top: 27px; }
.model { height: 105px; margin: 0 36px 36px; padding-left: 36px; border-radius: 7px; background: #f2f2f2; color: #505050; font-weight: 700; font-size: 28.800px; line-height: 105px; display: flex; align-items: center; gap: 35px; }
.model + .model { margin-bottom: 27px; }
.model.hover { background: #ececec; }
.model svg { margin-top: 5px; }

/* dock */
.dock {
  position: relative; flex: none; margin: 2px 0 0 171px; width: 2539px; height: 112px; padding: 14px 0 0 3px;
  border: 2px solid rgba(255,255,255,.18); border-radius: 40px;
  display: flex;
  background: linear-gradient(90deg, #1a1e29 0, #1b1e24 300px, #331722 440px, #3b1829 600px, #471d1e 850px, #481e1d 1050px, #3c1521 1250px, #3b1623 1600px, #46192f 1850px, #3e1829 2000px, #551f1c 2300px, #64251c 2539px);
  background-clip: padding-box;
  box-shadow: 0 0 56px 6px rgba(0,0,0,.25);
}
.app { width: 94px; height: 96px; display: flex; justify-content: center; position: relative; flex: none; }
.app svg { width: 74px; height: 74px; filter: drop-shadow(0 1px 2px rgba(0,0,0,.35)); }
.app.on::after { content: ""; position: absolute; left: 42px; top: 84px; width: 8px; height: 8px; border-radius: 50%; background: rgba(250,215,230,.66); }
.sep { width: 41px; height: 84px; margin-top: -2px; flex: none; background: linear-gradient(rgba(255,255,255,.35), rgba(255,255,255,.35)) center / 2px 100% no-repeat; }
.sep.second { width: 45px; }
.badge2 { position: absolute; left: 58px; top: -8px; width: 34px; height: 34px; border-radius: 50%; background: #e9503f; color: #fff; font-weight: 400; font-size: 20px; line-height: 34px; text-align: center; }
.mon { font: 600 14px Inter, sans-serif; fill: #fff; text-anchor: middle; }
.day { font: 300 43px Inter, sans-serif; fill: #222; text-anchor: middle; letter-spacing: -2px; }
.mu-big { font: 700 104px Inter, sans-serif; fill: #76b83f; }
.zm { font: 500 21px Inter, sans-serif; fill: #fff; text-anchor: middle; letter-spacing: -.6px; }
.num { font: 600 10px Inter, sans-serif; fill: #222; text-anchor: middle; }
```
